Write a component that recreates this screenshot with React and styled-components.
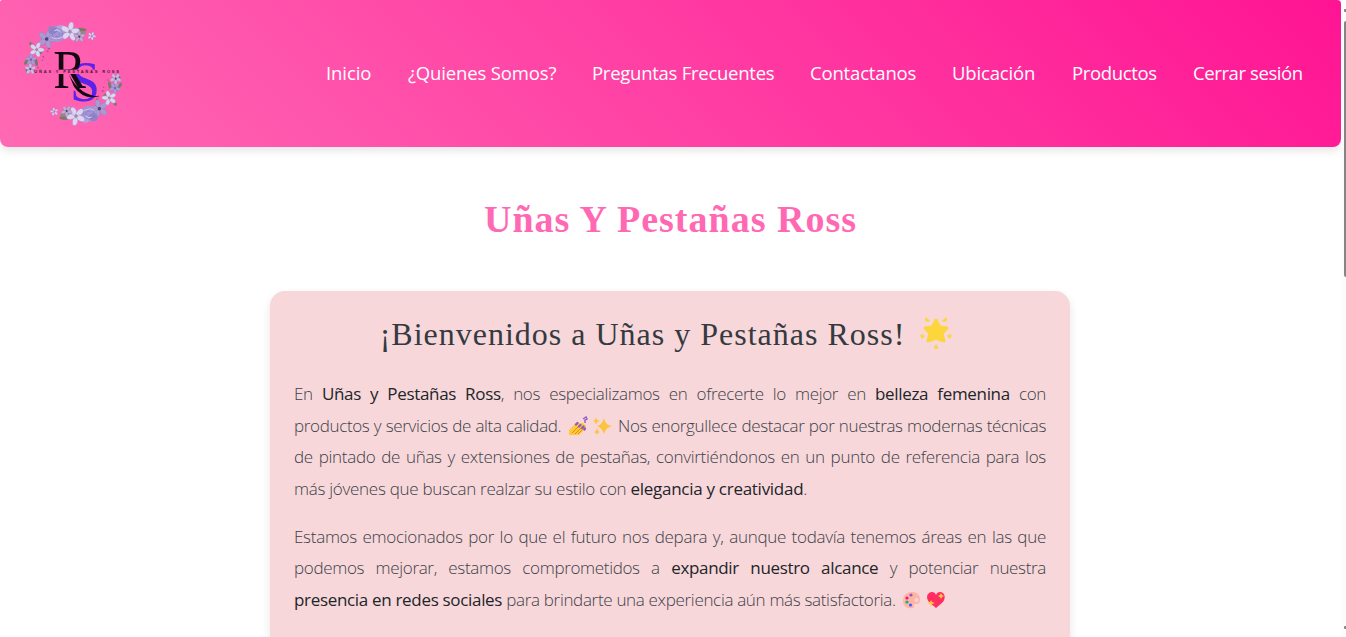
import React from "react";
import styled, { createGlobalStyle } from "styled-components";

const GlobalStyle = createGlobalStyle`
  * { box-sizing: border-box; }
  body { margin: 0; background: #fff; overflow: hidden; }
`;
const Page = styled.div`
  display: grid;
  grid-template-columns: 1341px 5px;
  height: 637px;
  overflow: hidden;
  font-family: "Open Sans", "Noto Sans", sans-serif;
`;
const Content = styled.div`
  min-width: 0;
  height: 637px;
  overflow: hidden;
`;
const Header = styled.header`
  display: flex;
  align-items: center;
  justify-content: space-between;
  height: 147px;
  padding: 0 38px 0 20px;
  border-radius: 2px 4px 8px 8px;
  background: linear-gradient(45deg, #ff69b4, #ff1493);
  box-shadow: 0 4px 8px rgba(0, 0, 0, 0.1);
`;
const LogoArt = styled.svg`
  display: block;
  width: 110px;
  height: 110px;
  margin-top: 2px;
`;
const Nav = styled.nav`
  display: flex;
  gap: 36px;
  padding-bottom: 2px;
`;
const NavLink = styled.a`
  width: ${(p) => p.$width}px;
  color: #fff;
  font-size: 18.5px;
  line-height: 28px;
  letter-spacing: ${(p) => p.$track || 0}px;
  white-space: nowrap;
`;
const Title = styled.h1`
  margin: 48px 0 0;
  color: #ff69b4;
  font: bold 38px/48px "Liberation Serif", serif;
  letter-spacing: 1px;
  text-align: center;
`;
const Card = styled.main`
  width: 800px;
  height: 420px;
  margin: 48px 271px 0 270px;
  padding: 19px 24px;
  border-radius: 15px;
  background: #f7d7da;
  box-shadow: 0 4px 10px rgba(0, 0, 0, 0.1);
`;
const Heading = styled.h2`
  display: flex;
  align-items: center;
  justify-content: center;
  gap: 14px;
  margin: 0 0 20px;
  padding-right: 7px;
  color: #343a40;
  font: 400 32px/48px "Liberation Serif", serif;
  letter-spacing: 1px;
  white-space: nowrap;
`;
const Paragraph = styled.p`
  margin: 0 0 16px;
  color: #3c4248;
  font-size: 17px;
  font-weight: 300;
  line-height: 31.68px;
`;
const Line = styled.span`
  display: block;
  white-space: nowrap;
  text-align: justify;
  text-align-last: ${(p) => (p.$last ? "left" : "justify")};
  letter-spacing: ${(p) => p.$track ?? -0.28}px;
`;
const Strong = styled.strong`
  color: #212529;
  font-weight: 400;
`;
const Emoji = styled.svg`
  width: ${(p) => p.$size || 20}px;
  height: ${(p) => p.$size || 20}px;
  margin: 0 ${(p) => p.$gap ?? 2}px;
  vertical-align: -4px;
`;
const StarArt = styled(Emoji)`
  margin-bottom: 2px;
`;
const Scrollbar = styled.aside`
  display: flex;
  flex-direction: column;
  align-items: flex-end;
  justify-content: space-between;
  height: 637px;
  padding: 9px 0 8px;
  background: #fcfcfc;
`;
const Arrow = styled.i`
  width: 2px;
  height: 3px;
  border-radius: 1px 0 0 1px;
  background: #858585;
`;
const Thumb = styled.i`
  width: 2px;
  height: 256px;
  margin: 9px 0 auto;
  border-radius: 2px 0 0 2px;
  background: #858585;
`;

function Flower({ x, y, r, fill, core = "#6b5a78", turn = 0 }) {
  return (
    <g transform={`translate(${x} ${y}) rotate(${turn})`}>
      {[0, 72, 144, 216, 288].map((a) => (
        <ellipse key={a} cy={-r * 0.58} rx={r * 0.3} ry={r * 0.5} fill={fill} stroke="#8f78b8" strokeWidth="1" transform={`rotate(${a})`} />
      ))}
      <circle r={r * 0.2} fill={core} />
    </g>
  );
}
function Leaf({ x, y, turn, fill = "#7c7965", size = 14 }) {
  return <ellipse cx={x} cy={y} rx={size} ry={size * 0.38} fill={fill} transform={`rotate(${turn} ${x} ${y})`} />;
}
function Garland() {
  return (
    <g>
      <Leaf x={246} y={89} turn={5} />
      <Leaf x={244} y={100} turn={-12} fill="#928b79" />
      <Leaf x={97} y={138} turn={55} />
      <Leaf x={125} y={153} turn={-60} size={11} />
      <Leaf x={82} y={183} turn={-50} />
      <Leaf x={109} y={187} turn={80} size={12} />
      <Leaf x={81} y={212} turn={70} size={10} />
      <g fill="#b0528f">
        <circle cx="147" cy="145" r="3.5" />
        <circle cx="143" cy="154" r="3" />
        <circle cx="130" cy="170" r="3" />
        <circle cx="127" cy="181" r="2.5" />
        <circle cx="114" cy="203" r="2.5" />
      </g>
      <Flower x={140} y={117} r={26} fill="#aa99d2" core="#4e436f" turn={20} />
      <circle cx="171" cy="102" r="24" fill="#a394d5" />
      <circle cx="157" cy="91" r="12" fill="#8f84c8" />
      <circle cx="182" cy="87" r="12" fill="#b1a5df" />
      <g fill="none" stroke="#8176bd" strokeWidth="2">
        <path d="M152 96Q170 76 186 94Q192 112 173 118Q153 116 158 100" />
        <path d="M162 99Q174 88 181 101Q178 112 167 109" />
      </g>
      <path d="M155 111Q168 122 186 111M163 92Q171 86 179 94" fill="none" stroke="#d9cbed" strokeWidth="3" />
      <Flower x={210} y={95} r={27} fill="#ded5f3" core="#9991aa" turn={10} />
      <Flower x={238} y={110} r={16} fill="#bcaed5" core="#4f4356" />
      <Flower x={275} y={108} r={12} fill="#e9c9ee" core="#a27f9b" turn={25} />
      <Flower x={110} y={149} r={21} fill="#ded5f3" core="#9c9283" turn={20} />
      <Flower x={93} y={179} r={16} fill="#aa9bd9" core="#7162a1" />
      <Flower x={91} y={207} r={16} fill="#cdbde2" core="#5b4872" />
    </g>
  );
}
function Logo() {
  return (
    <LogoArt viewBox="60 60 330 330" role="img" aria-label="Uñas y Pestañas Ross">
      <Garland />
      <g transform="rotate(180 219 221.5)"><Garland /></g>
      <g fontFamily="Liberation Serif, serif">
        <text x="210" y="304" fontSize="174" fill="#5b22ea" textLength="90" lengthAdjust="spacingAndGlyphs">S</text>
        <text x="160" y="263" fontSize="163" fill="#160812" textLength="98" lengthAdjust="spacingAndGlyphs">R</text>
        <path d="M206 222Q240 288 298 289Q250 301 222 260Z" fill="#160812" />
        <rect x="158" y="209" width="140" height="13" fill="#ff5bad" />
        <text x="103" y="220" fontSize="12" fontWeight="700" fill="#4b1238" fontFamily="Liberation Sans, sans-serif" textLength="254">UÑAS Y PESTAÑAS ROSS</text>
      </g>
    </LogoArt>
  );
}
function Star() {
  return (
    <StarArt $size={34} $gap={0} viewBox="0 0 34 34">
      <g fill="#fdd63d" stroke="#fdd63d" strokeLinejoin="round" strokeWidth="3">
        <path d="M17 4L20.5 11L28 12L23 17.5L25 25L17 22L9 25L11 17.5L6 12L13.5 11Z" />
        <path d="M7 2L10 5L7 5ZM27 2L24 5L27 5ZM2 19L5 20L3 22ZM32 19L29 20L31 22ZM17 29L18.5 32L15.5 32Z" strokeWidth="1.4" />
      </g>
    </StarArt>
  );
}
function Nails() {
  return (
    <Emoji viewBox="0 0 20 20">
      <path d="M1 19L1 14L8 7L15 7L18 10L17 13L11 19Z" fill="#ffc83d" />
      <path d="M4 17L10 11M7 18L13 12M10 18L16 12" stroke="#d67d00" strokeWidth="0.8" />
      <path d="M8 8.5L9.5 7M11 10.5L12.5 9M14 12L15.5 10.5M16.5 13.5L17 12.5" stroke="#8e5bc0" strokeWidth="2.4" strokeLinecap="round" />
      <path d="M15 3L18 1L19 3L17 4L17 7" fill="none" stroke="#9863c5" strokeWidth="1.5" />
    </Emoji>
  );
}
function Sparkles() {
  return (
    <Emoji viewBox="0 0 20 20">
      <path d="M12 2Q13 9 20 10Q13 12 12 18Q10 12 5 10Q10 9 12 2ZM4 1L5 4L8 5L5 6L4 9L3 6L1 5L3 4ZM5 12L6 15L8 16L6 17L5 19L4 17L2 16L4 15Z" fill="#fcc33c" />
    </Emoji>
  );
}
function Palette() {
  return (
    <Emoji viewBox="0 0 20 20">
      <path d="M10 2C4 2 1 6 1 11S5 19 11 18C14 17 10 14 13 14S19 13 18 8C17 4 14 2 10 2Z" fill="#ffb5a6" />
      <circle cx="14.5" cy="10" r="2" fill="#f7d6d9" />
      <circle cx="9" cy="5" r="1.6" fill="#8f59c6" />
      <circle cx="5" cy="8" r="1.6" fill="#ed1781" />
      <circle cx="5" cy="12" r="1.6" fill="#10b566" />
      <circle cx="8.5" cy="15" r="1.6" fill="#3e64ff" />
    </Emoji>
  );
}
function Heart() {
  return (
    <Emoji viewBox="0 0 20 20">
      <path d="M10 18L3 12C-1 7 2 2 6 2Q9 2 10 5Q11 2 14 2C19 2 20 8 17 12Z" fill="#ff2d60" />
      <path d="M15 3L16 5L18 6L16 7L15 9L14 7L12 6L14 5ZM5 10L6 12L9 13L6 14L5 17L4 14L1 13L4 12Z" fill="#ffca3d" />
    </Emoji>
  );
}

const links = [
  ["Inicio", 46, -0.1], ["¿Quienes Somos?", 148, -0.15], ["Preguntas Frecuentes", 182, -0.26],
  ["Contactanos", 106, -0.17], ["Ubicación", 84, -0.15], ["Productos", 85, -0.35], ["Cerrar sesión", 110, -0.4],
];

export default function App() {
  return (
    <Page>
      <GlobalStyle />
      <Content>
        <Header>
          <Logo />
          <Nav>
            {links.map(([label, width, track]) => (
              <NavLink key={label} $width={width} $track={track}>{label}</NavLink>
            ))}
          </Nav>
        </Header>
        <Title>Uñas Y Pestañas Ross</Title>
        <Card>
          <Heading>¡Bienvenidos a Uñas y Pestañas Ross! <Star /></Heading>
          <Paragraph>
            <Line $track={-0.33}>En <Strong>Uñas y Pestañas Ross</Strong>, nos especializamos en ofrecerte lo mejor en <Strong>belleza femenina</Strong> con</Line>
            <Line $track={-0.34}>productos y servicios de alta calidad. <Nails /><Sparkles /> Nos enorgullece destacar por nuestras modernas técnicas</Line>
            <Line>de pintado de uñas y extensiones de pestañas, convirtiéndonos en un punto de referencia para los</Line>
            <Line $last>más jóvenes que buscan realzar su estilo con <Strong>elegancia y creatividad</Strong>.</Line>
          </Paragraph>
          <Paragraph>
            <Line>Estamos emocionados por lo que el futuro nos depara y, aunque todavía tenemos áreas en las que</Line>
            <Line $track={-0.33}>podemos mejorar, estamos comprometidos a <Strong>expandir nuestro alcance</Strong> y potenciar nuestra</Line>
            <Line $last $track={-0.32}><Strong>presencia en redes sociales</Strong> para brindarte una experiencia aún más satisfactoria. <Palette /><Heart /></Line>
          </Paragraph>
        </Card>
      </Content>
      <Scrollbar><Arrow /><Thumb /><Arrow /></Scrollbar>
    </Page>
  );
}
